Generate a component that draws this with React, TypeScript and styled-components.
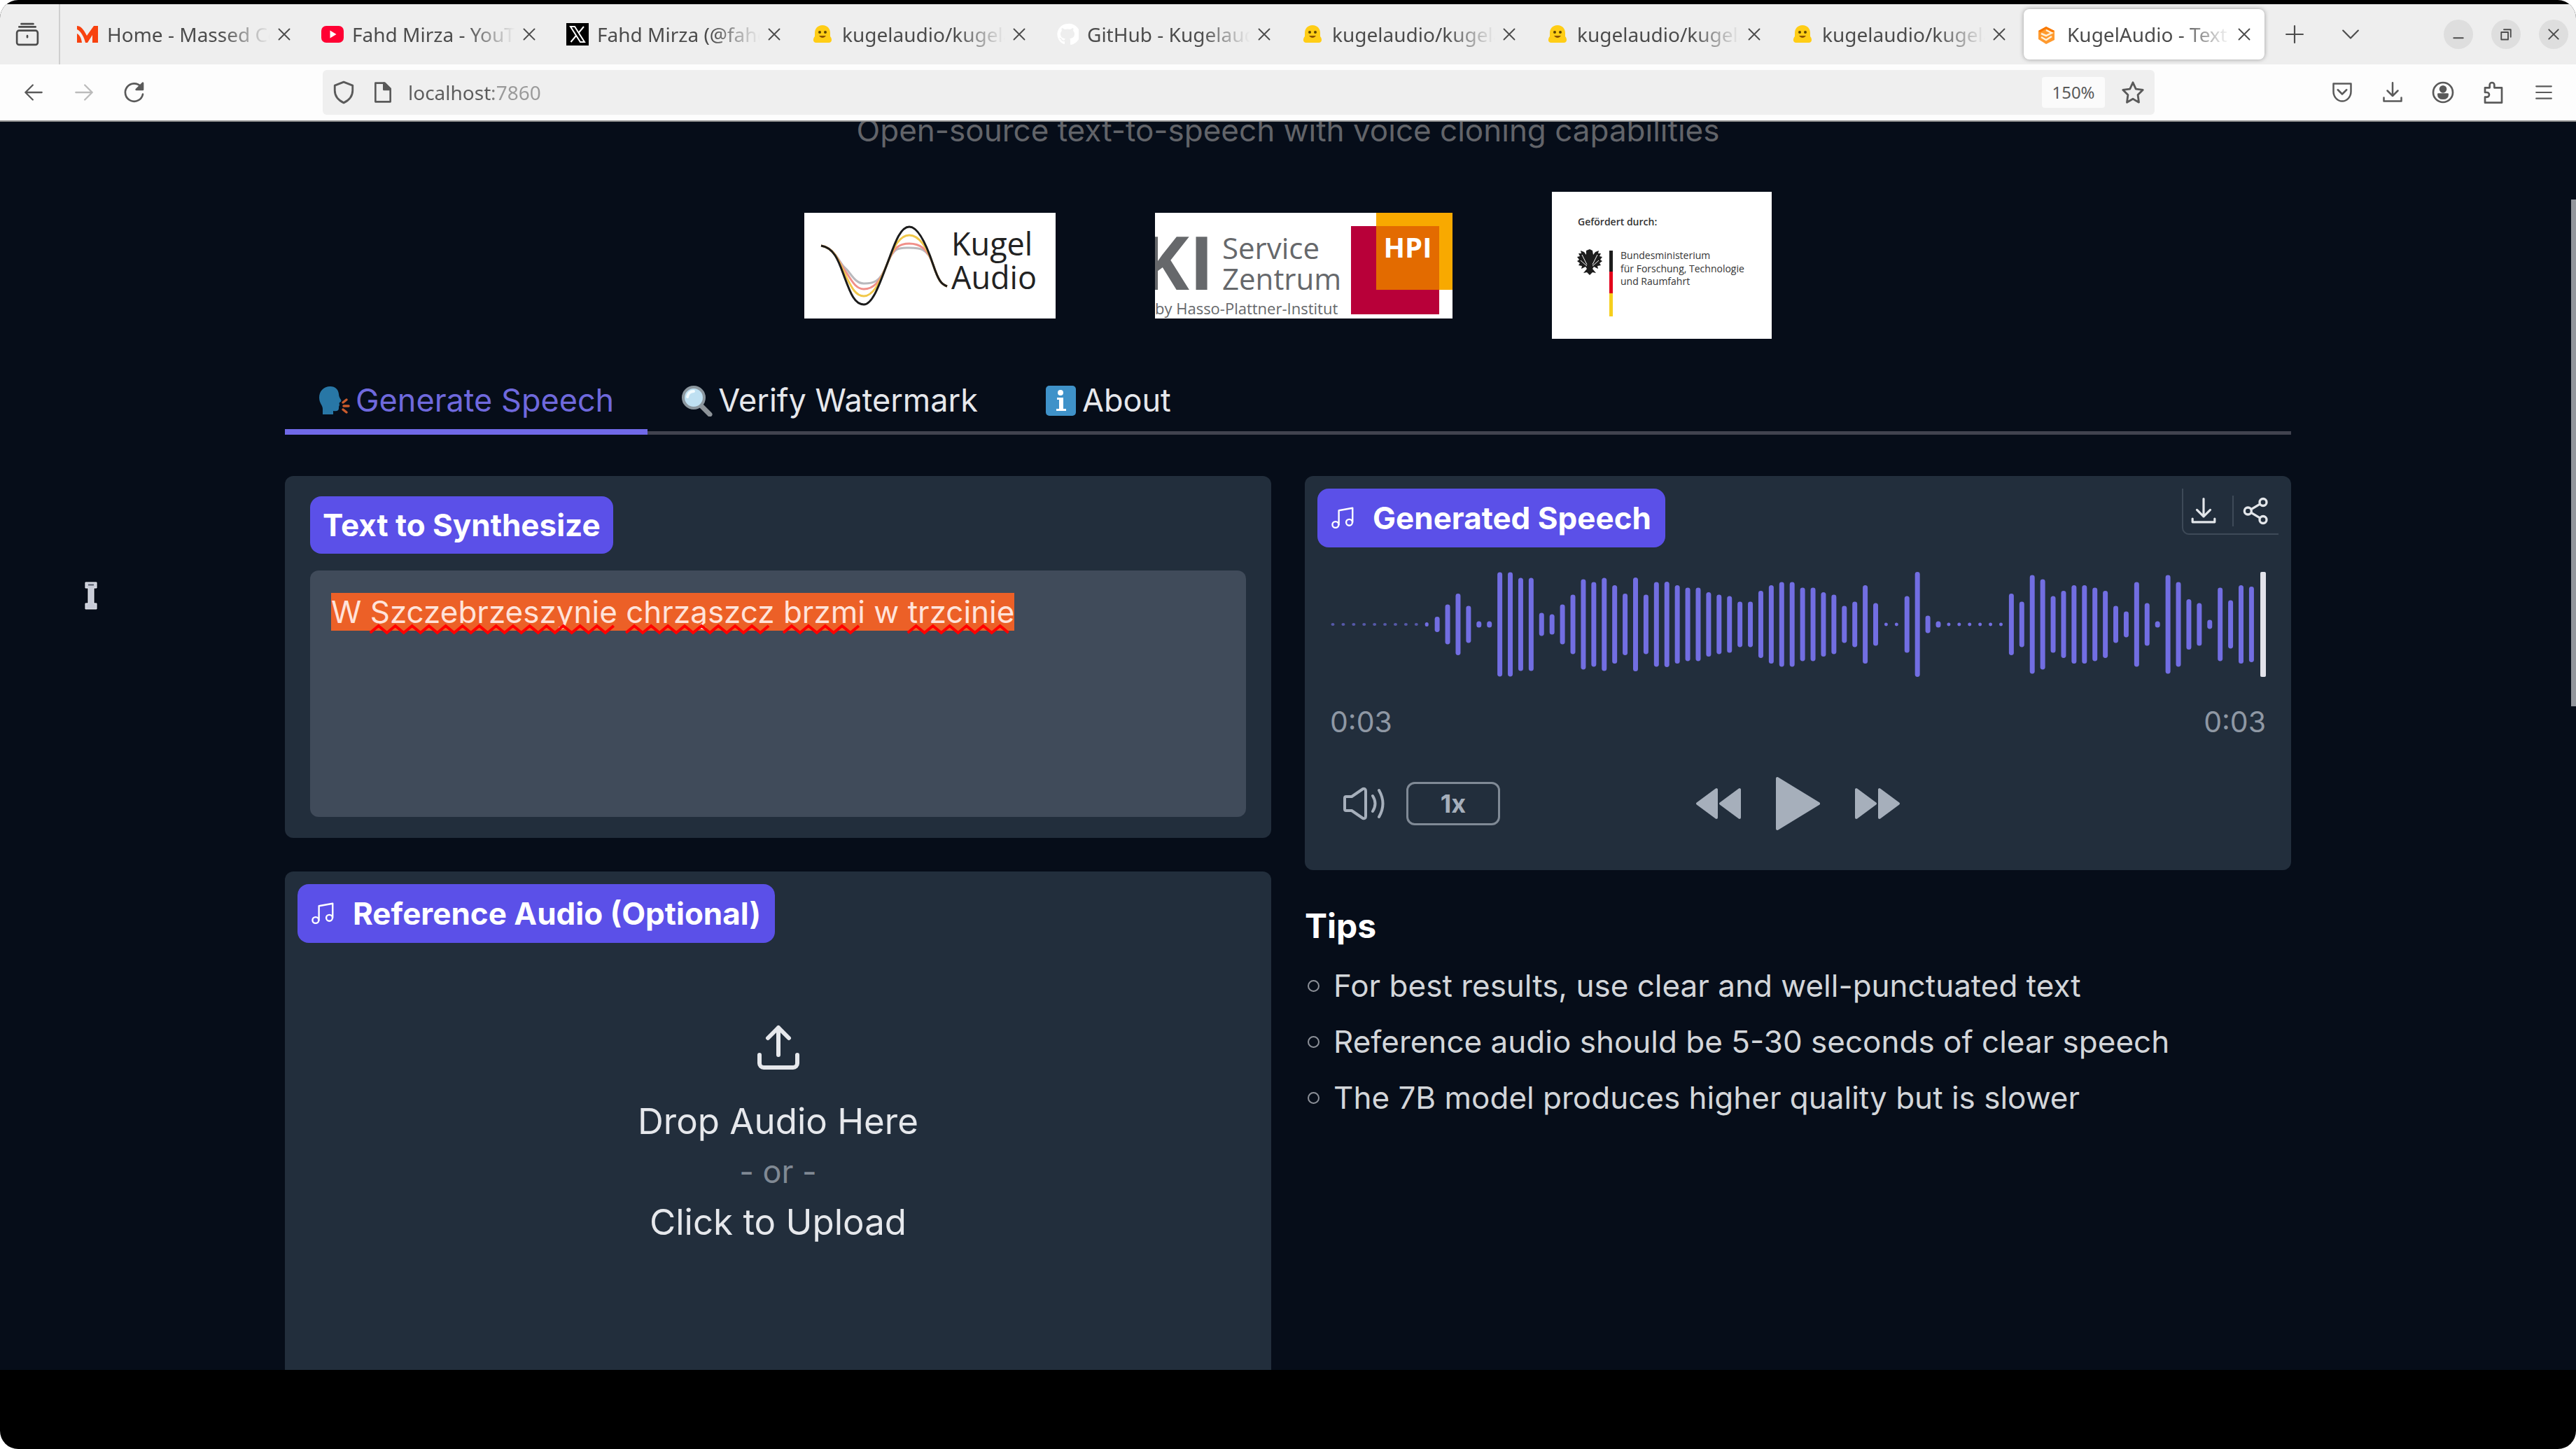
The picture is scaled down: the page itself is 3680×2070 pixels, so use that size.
import React, { useEffect, useLayoutEffect, useRef, useState } from "react";
import styled, { createGlobalStyle, css } from "styled-components";

const UI_FONT = `Inter, "Open Sans", sans-serif`;
const CHROME_FONT = `"Noto Sans", "Open Sans", sans-serif`;

const GlobalStyle = createGlobalStyle`
  *, *::before, *::after { box-sizing: border-box; }
  html, body { margin: 0; background: #ffffff; }
  body { font-family: ${UI_FONT}; }
  button, input, textarea { font: inherit; color: inherit; }
  button { border: 0; padding: 0; background: none; cursor: pointer; }
  h2, p, ul { margin: 0; padding: 0; }
`;

/* ---------- window frame ---------- */

const Frame = styled.div`
  position: relative;
  height: 100vh;
  display: flex;
  flex-direction: column;
  padding: 6px 0 113px;
  background: #000000;
  border-radius: 26px;
  overflow: hidden;
`;

const TabStrip = styled.header`
  display: flex;
  align-items: center;
  flex: none;
  height: 86px;
  background: #eeeeee;
  color: #4c4c4c;
  font: 400 28px/36px ${CHROME_FONT};
`;

const RecentButton = styled.button`
  display: grid;
  place-items: center;
  align-self: stretch;
  width: 86px;
  padding-right: 6px;
  border-right: 2px solid #cfcfcf;
`;

const BrowserTabs = styled.nav`
  display: flex;
  gap: 6px;
  padding-left: 5px;
`;

const BrowserTab = styled.div<{ $active?: boolean }>`
  display: flex;
  align-items: center;
  width: 344px;
  height: 72px;
  padding: 0 9px 0 18px;
  border-radius: 8px;
  ${(p) =>
    p.$active &&
    css`
      background: #ffffff;
      box-shadow: 0 0 6px rgba(0, 0, 0, 0.35);
    `}
`;

const TabTitle = styled.span`
  flex: 1;
  min-width: 0;
  margin-left: 12px;
  overflow: hidden;
  white-space: nowrap;
  mask-image: linear-gradient(to right, #000 70%, transparent 100%);
`;

const CloseButton = styled.button`
  display: grid;
  place-items: center;
  width: 40px;
  height: 40px;
`;

const StripActions = styled.div`
  display: flex;
  gap: 40px;
  margin-left: 23px;
`;

const WindowActions = styled.div`
  display: flex;
  gap: 26px;
  margin-left: auto;
  padding-right: 11px;
`;

const IconButton = styled.button<{ $round?: boolean }>`
  display: grid;
  place-items: center;
  width: 40px;
  height: 40px;
  ${(p) =>
    p.$round &&
    css`
      width: 42px;
      height: 42px;
      border-radius: 50%;
      background: #dedede;
    `}
  &:disabled {
    opacity: 0.4;
  }
`;

const NavBar = styled.div`
  display: flex;
  align-items: center;
  flex: none;
  height: 82px;
  background: #fdfdfd;
  border-bottom: 2px solid #8d8d8d;
  color: #5a5a5a;
  font: 400 28px/36px ${CHROME_FONT};
`;

const NavButtons = styled.div`
  display: flex;
  gap: 32px;
  width: 461px;
  padding-left: 28px;
`;

const AddressBar = styled.div`
  display: flex;
  align-items: center;
  flex: 1;
  height: 64px;
  padding: 0 11px 0 10px;
  gap: 16px;
  border-radius: 6px;
  background: #efefef;
`;

const AddressInput = styled.input`
  flex: 1;
  min-width: 0;
  border: 0;
  outline: 0;
  padding: 0;
  background: linear-gradient(to right, #5c5c5c 122px, #9a9a9a 122px);
  background-clip: text;
  color: transparent;
`;

const ZoomLevel = styled.button`
  width: 90px;
  height: 44px;
  margin-right: 4px;
  border-radius: 4px;
  background: #fbfbfb;
  font-size: 24px;
`;

const NavTools = styled.div`
  display: flex;
  justify-content: flex-end;
  gap: 32px;
  width: 602px;
  padding-right: 26px;
`;

/* ---------- page ---------- */

const Page = styled.main`
  position: relative;
  flex: 1;
  min-height: 0;
  overflow: hidden;
  background: #060d19;
  color: #e6e8ec;
`;

const ScrollThumb = styled.div`
  position: absolute;
  top: 111px;
  right: 0;
  width: 7px;
  height: 724px;
  background: #93969c;
`;

const Container = styled.div`
  width: 100%;
  max-width: 2866px;
  margin: 0 auto;
`;

const Subtitle = styled.p`
  margin-top: -18px;
  text-align: center;
  color: #626469;
  font-size: 44px;
  line-height: 60px;
`;

const LogoRow = styled.div`
  display: flex;
  justify-content: center;
  align-items: center;
  gap: 142px;
  margin-top: 58px;
`;

const Logo = styled.svg`
  display: block;
  background: #ffffff;
`;

const TabList = styled.div`
  display: flex;
  margin-top: 41px;
  box-shadow: inset 0 -5px #41434f;
`;

const PageTab = styled.button<{ $active?: boolean }>`
  display: flex;
  align-items: center;
  gap: 8px;
  height: 96px;
  padding: 6px 48px 0;
  border-bottom: 8px solid ${(p) => (p.$active ? "#7069e8" : "transparent")};
  color: ${(p) => (p.$active ? "#6f69dd" : "#e6e8ec")};
  font-size: 45px;
  line-height: 60px;
`;

const Columns = styled.div`
  display: grid;
  grid-template-columns: 1fr 1fr;
  align-items: start;
  gap: 48px;
  margin-top: 59px;
`;

const Column = styled.div`
  display: flex;
  flex-direction: column;
  gap: 48px;
`;

const Card = styled.section`
  border-radius: 12px;
  background: #222e3c;
`;

const labelLook = css`
  display: inline-flex;
  align-items: center;
  gap: 24px;
  border-radius: 16px;
  background: #5b50e8;
  color: #ffffff;
  font-size: 44px;
  font-weight: 700;
  line-height: 54px;
`;

const FieldLabel = styled.label`
  ${labelLook}
  padding: 14px 18px;
`;

const BlockLabel = styled.div`
  ${labelLook}
  height: 84px;
  padding: 0 20px 0 17px;
`;

const TextCard = styled(Card)`
  display: flex;
  flex-direction: column;
  align-items: flex-start;
  gap: 24px;
  padding: 29px 36px 30px;
`;

const TextWrap = styled.div`
  position: relative;
  width: 100%;
`;

const TextArea = styled.textarea`
  display: block;
  width: 100%;
  height: 352px;
  padding: 33px 30px;
  border: 0;
  outline: 0;
  border-radius: 12px;
  resize: none;
  background: #404b5a;
  font-size: 44px;
  line-height: 52px;
  &::selection {
    background: #ec6027;
    color: #ffe3da;
  }
`;

const Squiggles = styled.svg`
  position: absolute;
  inset: 0;
  width: 100%;
  height: 100%;
  pointer-events: none;
`;

const CardHead = styled.div`
  display: flex;
  justify-content: space-between;
  align-items: flex-start;
  padding: 18px 18px 0;
`;

const DropArea = styled.label`
  display: flex;
  flex-direction: column;
  align-items: center;
  height: 800px;
  padding-top: 115px;
  font-size: 51px;
  line-height: 72px;
  cursor: pointer;
  svg { margin-bottom: 32px; }
`;

const HiddenInput = styled.input`
  position: absolute;
  width: 1px;
  height: 1px;
  opacity: 0;
`;

const OrText = styled.span`
  color: #808994;
  font-size: 45px;
`;

const CardTools = styled.div`
  display: flex;
  align-items: center;
  height: 66px;
  border: solid #3e4a58;
  border-width: 0 0 2px 2px;
  border-radius: 0 0 0 10px;
  color: #e3e6ea;
`;

const CardTool = styled.button`
  display: grid;
  place-items: center;
  width: 70px;
  height: 44px;
  padding-right: 12px;
  & + & {
    width: 66px;
    padding-right: 0;
    border-left: 2px solid #3e4a58;
  }
`;

const Player = styled.div`
  display: flex;
  flex-direction: column;
  padding: 35px 36px 55px;
  color: #a6afbb;
`;

const Wave = styled.svg`
  display: block;
  width: 100%;
  height: 150px;
`;

const Times = styled.div`
  display: flex;
  justify-content: space-between;
  margin-top: 34px;
  color: #8f98a4;
  font-size: 41px;
  line-height: 60px;
`;

const Controls = styled.div`
  display: grid;
  grid-template-columns: 1fr auto 1fr;
  align-items: center;
  height: 80px;
  margin-top: 47px;
`;

const ControlGroup = styled.div<{ $gap: number }>`
  display: flex;
  align-items: center;
  gap: ${(p) => p.$gap}px;
`;

const VolumeButton = styled.button`
  display: grid;
  margin-left: 17px;
`;

const SpeedButton = styled.button`
  width: 134px;
  height: 62px;
  border: 3px solid #808a96;
  border-radius: 12px;
  color: #a6afbb;
  font-size: 36px;
  font-weight: 700;
`;

const PlayerButton = styled.button`
  display: grid;
`;

const TipsTitle = styled.h2`
  color: #ffffff;
  font-size: 48px;
  font-weight: 700;
  line-height: 64px;
`;

const TipList = styled.ul`
  margin-top: 13px;
  list-style: none;
  color: #d3d6da;
  font-size: 44px;
  line-height: 80px;
`;

const Tip = styled.li`
  display: flex;
  align-items: center;
  gap: 20px;
  padding-left: 4px;
  &::before {
    content: "";
    width: 17px;
    height: 17px;
    border: 2px solid #8c9098;
    border-radius: 50%;
  }
`;

const Pointer = styled.svg`
  position: absolute;
  left: 121px;
  top: 831px;
`;

/* ---------- drawings ---------- */

type GlyphProps = { size?: number; width?: number; children: React.ReactNode; box?: string };

const Glyph = ({ size = 34, width = 2, box = "0 0 24 24", children }: GlyphProps) => (
  <svg
    width={size}
    height={size}
    viewBox={box}
    fill="none"
    stroke="currentColor"
    strokeWidth={width}
    strokeLinecap="round"
    strokeLinejoin="round"
    aria-hidden
  >
    {children}
  </svg>
);

const MusicIcon = () => (
  <Glyph size={38} width={1.5}>
    <path d="M8.6 18V5.2L21 3v12.6" />
    <circle cx="5.6" cy="18" r="2.8" />
    <circle cx="18" cy="16" r="2.8" />
  </Glyph>
);

const Favicon = ({ kind }: { kind: string }) => (
  <svg width="32" height="32" viewBox="0 0 32 32" aria-hidden>
    {kind === "massed" && (
      <g fill="#f8420f">
        <path d="M1 4c5 0 9 4 14 14L25 4h6v24h-8V17l-7 11h-3C11 20 7 12 1 9z" />
        <path d="M1 15c4 2 6 6 7 13H1z" />
      </g>
    )}
    {kind === "youtube" && (
      <>
        <rect y="4" width="32" height="24" rx="7" fill="#ff0033" />
        <path d="M12.500 10.500v11l9-5.500z" fill="#fff" />
      </>
    )}
    {kind === "x" && (
      <>
        <rect width="32" height="32" fill="#000" />
        <path d="M6 5h6l14 22h-6z" fill="none" stroke="#fff" strokeWidth="2" />
        <path d="M25 5L17.500 14M14 18L6.500 27" stroke="#fff" strokeWidth="2" />
      </>
    )}
    {kind === "face" && (
      <>
        <path d="M16 3c7 0 11 5 11 11v5c3 3 3 9-2 9H7c-5 0-5-6-2-9v-5C5 8 9 3 16 3z" fill="#ffcd16" />
        <circle cx="12" cy="13" r="2" fill="#5b4300" />
        <circle cx="20" cy="13" r="2" fill="#5b4300" />
        <path d="M11 18c3 4 7 4 10 0z" fill="#8a5200" />
      </>
    )}
    {kind === "github" && (
      <path
        fill="#fff"
        d="M16 1a15 15 0 0 0-5 29c1 0 1-1 1-1v-3c-4 1-5-2-5-2-1-2-2-2-2-2-1-1 0-1 0-1 2 0 3 2 3 2 1 2 3 2 4 1 0-1 1-2 1-2-4 0-7-2-7-7 0-2 1-3 2-4-1-2 0-4 0-4s1 0 4 2a14 14 0 0 1 8 0c3-2 4-2 4-2s1 2 0 4c1 1 2 2 2 4 0 5-3 7-7 7 1 1 1 2 1 3v5s0 1 1 1A15 15 0 0 0 16 1z"
      />
    )}
    {kind === "gradio" && (
      <>
        <path d="M14 5l12 6v13l-12 6L3 23V11z" fill="#ff9a2e" />
        <path d="M14 10l8 4-8 4-7-3M22 19l-8 5-7-4" fill="none" stroke="#fff0d8" strokeWidth="2.500" />
        <path d="M3 11l11-6 12 6-3 2-9-5-8 5z" fill="#f97700" />
      </>
    )}
  </svg>
);

const HeadIcon = () => (
  <svg width="45" height="45" viewBox="0 0 45 45" aria-hidden>
    <path
      d="M17 2C7 2 1 9 1 18c0 8 5 11 5 16v8h15v-5c5 1 8 0 8-4 0-2 0-3 1-4 0-2-1-2 0-4 2-1 3-2 2-4-2-3-3-5-3-8C28 6 24 2 17 2z"
      fill="#2877a6"
    />
    <path d="M35 25l5-4M36 30h7M35 35l5 4" stroke="#c95b2c" strokeWidth="3.500" strokeLinecap="round" />
  </svg>
);

const LensIcon = () => (
  <svg width="45" height="45" viewBox="0 0 45 45" aria-hidden>
    <path d="M28 29l13 13" stroke="#8d9399" strokeWidth="7" strokeLinecap="round" />
    <circle cx="18" cy="18" r="15" fill="#bfe0f2" stroke="#8c979f" strokeWidth="4" />
    <path d="M9 17c1-5 4-8 9-8" stroke="#f2fbff" strokeWidth="4" fill="none" strokeLinecap="round" />
  </svg>
);

const InfoIcon = () => (
  <svg width="45" height="45" viewBox="0 0 45 45" aria-hidden>
    <rect x="1" y="1" width="43" height="43" rx="5" fill="#3f92c9" />
    <circle cx="22" cy="11" r="4" fill="#fff" />
    <path d="M17 18h9v16h4v3H16v-3h4V21h-3z" fill="#fff" />
  </svg>
);

const waves: [string, number, number][] = [
  ["#b9b9bd", 101, 50],
  ["#f0908a", 109, 44],
  ["#f1c84a", 119, 32],
  ["#1b1b1b", 131, 20],
];

const KugelLogo = () => (
  <Logo width="359" height="151" viewBox="0 0 359 151" role="img" aria-label="KugelAudio logo">
    {waves.map(([color, low, high]) => (
      <path
        key={color}
        d={`M24 47 C44 50 50 72 58 ${(low + 56) / 2} S72 ${low} 85 ${low} S108 100 118 74 S136 ${high} 150 ${high} S176 50 184 74 S196 102 204 105`}
        fill="none"
        stroke={color}
        strokeWidth="3"
      />
    ))}
    <g fill="#222" fontFamily="Open Sans" fontSize="45">
      <text x="210" y="61">Kugel</text>
      <text x="210" y="109">Audio</text>
    </g>
  </Logo>
);

const HpiLogo = () => (
  <Logo width="425" height="151" viewBox="0 0 425 151" role="img" aria-label="KI Service Zentrum logo">
    <rect x="280" y="19" width="126" height="126" fill="#b80039" />
    <rect x="316" width="109" height="110" fill="#f8a900" />
    <rect x="316" y="19" width="90" height="91" fill="#e36b00" />
    <g fontFamily="Open Sans" fill="#66686b">
      <text x="84" y="110" fontSize="106" fontWeight="700" textAnchor="end">KI</text>
      <text x="96" y="66" fontSize="42">Service</text>
      <text x="96" y="110" fontSize="42">Zentrum</text>
      <text x="0" y="145" fontSize="22">by Hasso-Plattner-Institut</text>
    </g>
    <text x="361" y="64" fontFamily="Open Sans" fontSize="40" fontWeight="700" fill="#fff" textAnchor="middle">
      HPI
    </text>
  </Logo>
);

const MinistryLogo = () => (
  <Logo width="314" height="210" viewBox="0 0 314 210" role="img" aria-label="Bundesministerium logo">
    <path
      fill="#1d1d1d"
      d="M54 82l4 2 1 6 3-4 5-2-1 4 4 0-2 4 4 1-3 4 3 2-4 3 2 3-5 1 1 4-6-3-2 3 5 6-5-1-4 4-4-4-5 1 5-6-2-3-6 3 1-4-5-1 2-3-4-3 3-2-3-4 4-1-2-4h4l-1-4 5 2 3 4 0-6z"
    />
    <path d="M43 90l7 14M65 90l-7 14M41 98l9 8M67 98l-9 8" stroke="#fff" strokeWidth="1" />
    <rect x="82" y="84" width="5" height="30" fill="#1d1d1d" />
    <rect x="82" y="114" width="5" height="31" fill="#e2001a" />
    <rect x="82" y="145" width="5" height="33" fill="#f6cf1d" />
    <g fill="#333" fontFamily="Open Sans" fontSize="14">
      <text x="37" y="48" fontWeight="600">Gefördert durch:</text>
      <text x="98" y="96">Bundesministerium</text>
      <text x="98" y="115">für Forschung, Technologie</text>
      <text x="98" y="133">und Raumfahrt</text>
    </g>
  </Logo>
);

/* bar heights of the clip, left to right */
const bars = [
  4, 4, 4, 4, 4, 4, 4, 4, 4, 6, 22, 57, 88, 53, 9, 9, 149, 149, 133, 133, 33, 29, 57, 85, 129, 121, 133, 112, 88,
  134, 85, 121, 122, 112, 105, 105, 92, 85, 81, 65, 65, 96, 112, 121, 121, 105, 105, 92, 85, 53, 65, 112, 61, 5, 5,
  81, 150, 25, 9, 5, 5, 5, 5, 5, 5, 88, 65, 141, 129, 81, 96, 112, 112, 105, 96, 53, 37, 121, 61, 9, 141, 121, 72,
  61, 13, 105, 69, 112, 108,
];

const Waveform = () => (
  <Wave viewBox="0 0 1338 150" role="img" aria-label="Waveform">
    {bars.map((h, i) => {
      const w = h < 7 ? 5 : 7;
      return (
        <rect
          key={i}
          x={4 + i * 14.925 - w / 2}
          y={75 - h / 2}
          width={w}
          height={h}
          rx={w / 2}
          fill="#726ee2"
          opacity={h < 5 ? 0.65 : 1}
        />
      );
    })}
    <rect x="1330" y="0" width="8" height="150" rx="2" fill="#e3e3ea" />
  </Wave>
);

/* ---------- text box with spelling marks ---------- */

const SENTENCE = "W Szczebrzeszynie chrząszcz brzmi w trzcinie";
const UNKNOWN = ["Szczebrzeszynie", "chrząszcz", "brzmi", "trzcinie"];

function SpellCheckedText() {
  const ref = useRef<HTMLTextAreaElement>(null);
  const [marks, setMarks] = useState<[number, number][]>([]);

  useLayoutEffect(() => {
    const ctx = document.createElement("canvas").getContext("2d");
    if (!ctx || !ref.current) return;
    const style = getComputedStyle(ref.current);
    ctx.font = `${style.fontWeight} ${style.fontSize} ${style.fontFamily}`;
    const left = parseFloat(style.paddingLeft);
    setMarks(
      UNKNOWN.map((word) => {
        const start = ctx.measureText(SENTENCE.slice(0, SENTENCE.indexOf(word))).width;
        return [left + start, left + start + ctx.measureText(word).width];
      })
    );
  }, []);

  useEffect(() => {
    ref.current?.focus();
    ref.current?.select();
  }, []);

  const zigzag = (from: number, to: number) => {
    let d = `M${from} 89`;
    for (let x = from + 12, up = true; x <= to; x += 12, up = !up) d += `L${x} ${up ? 79 : 89}`;
    return d;
  };

  return (
    <TextWrap>
      <TextArea id="synth-text" ref={ref} spellCheck={false} defaultValue={SENTENCE} />
      <Squiggles aria-hidden>
        {marks.map(([from, to]) => (
          <path key={from} d={zigzag(from, to)} fill="none" stroke="#ff0000" strokeWidth="4" />
        ))}
      </Squiggles>
    </TextWrap>
  );
}

/* ---------- app ---------- */

const browserTabs = [
  { icon: "massed", title: "Home - Massed Compute" },
  { icon: "youtube", title: "Fahd Mirza - YouTube" },
  { icon: "x", title: "Fahd Mirza (@fahdmirza)" },
  { icon: "face", title: "kugelaudio/kugelaudio" },
  { icon: "github", title: "GitHub - Kugelaudio" },
  { icon: "face", title: "kugelaudio/kugelaudio" },
  { icon: "face", title: "kugelaudio/kugelaudio" },
  { icon: "face", title: "kugelaudio/kugelaudio" },
  { icon: "gradio", title: "KugelAudio - Text to Speech", active: true },
];

const tips = [
  "For best results, use clear and well-punctuated text",
  "Reference audio should be 5-30 seconds of clear speech",
  "The 7B model produces higher quality but is slower",
];

const CloseGlyph = () => (
  <Glyph size={18} width={2.5}>
    <path d="M2 2l20 20M22 2L2 22" />
  </Glyph>
);

export default function App() {
  return (
    <>
      <GlobalStyle />
      <Frame>
        <TabStrip>
          <RecentButton aria-label="Recent browsing">
            <Glyph size={34} width={2.5} box="0 0 32 32">
              <rect x="2" y="11" width="28" height="19" rx="3" />
              <path d="M5 6h22M8 2h16M16 18v2" />
            </Glyph>
          </RecentButton>
          <BrowserTabs>
            {browserTabs.map((t, i) => (
              <BrowserTab key={i} $active={t.active}>
                <Favicon kind={t.icon} />
                <TabTitle>{t.title}</TabTitle>
                <CloseButton aria-label="Close tab">
                  <CloseGlyph />
                </CloseButton>
              </BrowserTab>
            ))}
          </BrowserTabs>
          <StripActions>
            <IconButton aria-label="New tab">
              <Glyph size={26}>
                <path d="M12 1v22M1 12h22" />
              </Glyph>
            </IconButton>
            <IconButton aria-label="List all tabs">
              <Glyph size={26}>
                <path d="M2 7l10 10L22 7" />
              </Glyph>
            </IconButton>
          </StripActions>
          <WindowActions>
            <IconButton $round aria-label="Minimize">
              <Glyph size={16} width={3}>
                <path d="M2 20h20" />
              </Glyph>
            </IconButton>
            <IconButton $round aria-label="Restore">
              <Glyph size={18} width={2.5}>
                <path d="M3 8h13v14H3zM8 3h13v14" />
              </Glyph>
            </IconButton>
            <IconButton $round aria-label="Close window">
              <Glyph size={16} width={3}>
                <path d="M2 2l20 20M22 2L2 22" />
              </Glyph>
            </IconButton>
          </WindowActions>
        </TabStrip>

        <NavBar>
          <NavButtons>
            <IconButton aria-label="Back">
              <Glyph size={28}>
                <path d="M22 12H2M11 3l-9 9 9 9" />
              </Glyph>
            </IconButton>
            <IconButton aria-label="Forward" disabled>
              <Glyph size={28}>
                <path d="M2 12h20M13 3l9 9-9 9" />
              </Glyph>
            </IconButton>
            <IconButton aria-label="Reload">
              <Glyph size={32}>
                <path d="M21 14a9.500 9.500 0 1 1-2-8" />
                <path d="M21 2v7h-7z" fill="currentColor" />
              </Glyph>
            </IconButton>
          </NavButtons>
          <AddressBar>
            <IconButton aria-label="Tracking protection">
              <Glyph size={34}>
                <path d="M12 1.500l9 3.500v5c0 6-4 10-9 12.500C7 20 3 16 3 10V5z" />
              </Glyph>
            </IconButton>
            <IconButton aria-label="Site information">
              <Glyph size={32}>
                <path d="M4 2h10l6 6v14H4z" />
                <path d="M13 2v7h7z" fill="currentColor" />
              </Glyph>
            </IconButton>
            <AddressInput aria-label="Address" defaultValue="localhost:7860" />
            <ZoomLevel>150%</ZoomLevel>
            <IconButton aria-label="Bookmark">
              <Glyph size={34}>
                <path d="M12 2l3 6.500 7 1-5 5 1 7.500-6-3.500L6 22l1-7.500-5-5 7-1z" />
              </Glyph>
            </IconButton>
          </AddressBar>
          <NavTools>
            <IconButton aria-label="Pocket">
              <Glyph size={30}>
                <path d="M2 2h20v9a10 11 0 0 1-20 0zM7 9l5 5 5-5" />
              </Glyph>
            </IconButton>
            <IconButton aria-label="Downloads">
              <Glyph size={30}>
                <path d="M12 1v15M6 10l6 6 6-6M2 18v4h20v-4" />
              </Glyph>
            </IconButton>
            <IconButton aria-label="Account">
              <Glyph size={32}>
                <circle cx="12" cy="12" r="10.500" />
                <circle cx="12" cy="8.500" r="3" fill="currentColor" />
                <path d="M7 14h10c0 3-2 4.500-5 4.500S7 17 7 14z" fill="currentColor" />
              </Glyph>
            </IconButton>
            <IconButton aria-label="Extensions">
              <Glyph size={32}>
                <path d="M8 7V4a2.500 2.500 0 0 1 5 0v3h8v16H3v-6h2a2.500 2.500 0 0 0 0-5H3V7z" />
              </Glyph>
            </IconButton>
            <IconButton aria-label="Menu">
              <Glyph size={26}>
                <path d="M2 4h20M2 12h20M2 20h20" />
              </Glyph>
            </IconButton>
          </NavTools>
        </NavBar>

        <Page>
          <Container>
            <Subtitle>Open-source text-to-speech with voice cloning capabilities</Subtitle>
            <LogoRow>
              <KugelLogo />
              <HpiLogo />
              <MinistryLogo />
            </LogoRow>
            <TabList role="tablist">
              <PageTab role="tab" aria-selected $active>
                <HeadIcon />
                Generate Speech
              </PageTab>
              <PageTab role="tab">
                <LensIcon />
                Verify Watermark
              </PageTab>
              <PageTab role="tab">
                <InfoIcon />
                About
              </PageTab>
            </TabList>

            <Columns>
              <Column>
                <TextCard>
                  <FieldLabel htmlFor="synth-text">Text to Synthesize</FieldLabel>
                  <SpellCheckedText />
                </TextCard>
                <Card>
                  <CardHead>
                    <BlockLabel>
                      <MusicIcon />
                      Reference Audio (Optional)
                    </BlockLabel>
                  </CardHead>
                  <DropArea>
                    <HiddenInput type="file" accept="audio/*" />
                    <Glyph size={72}>
                      <path d="M21 15v4a2 2 0 0 1-2 2H5a2 2 0 0 1-2-2v-4M17 7l-5-5-5 5M12 2v13" />
                    </Glyph>
                    <span>Drop Audio Here</span>
                    <OrText>- or -</OrText>
                    <span>Click to Upload</span>
                  </DropArea>
                </Card>
              </Column>

              <Column>
                <Card>
                  <CardHead>
                    <BlockLabel>
                      <MusicIcon />
                      Generated Speech
                    </BlockLabel>
                    <CardTools>
                      <CardTool aria-label="Download">
                        <Glyph size={38} width={2}>
                          <path d="M12 1v16M6 11l6 6 6-6M2 19v3h20v-3" />
                        </Glyph>
                      </CardTool>
                      <CardTool aria-label="Share">
                        <Glyph size={40} width={2}>
                          <circle cx="18" cy="4.500" r="3" />
                          <circle cx="18" cy="19.500" r="3" />
                          <circle cx="5" cy="12" r="3" />
                          <path d="M8 10.400l7-4.200M8 13.600l7 4.200" />
                        </Glyph>
                      </CardTool>
                    </CardTools>
                  </CardHead>
                  <Player>
                    <Waveform />
                    <Times>
                      <time>0:03</time>
                      <time>0:03</time>
                    </Times>
                    <Controls>
                      <ControlGroup $gap={28}>
                        <VolumeButton aria-label="Volume">
                          <svg width="64" height="50" viewBox="0 0 64 50" fill="none" stroke="currentColor" strokeWidth="4" strokeLinecap="round" strokeLinejoin="round" aria-hidden>
                            <path d="M4 17v16q0 2 2 2h8l16 11q4 1 4-3V7q0-4-4-3L14 15H6q-2 0-2 2zM44 14q7 11 0 22M53 6q11 19 0 38" />
                          </svg>
                        </VolumeButton>
                        <SpeedButton>1x</SpeedButton>
                      </ControlGroup>
                      <ControlGroup $gap={49}>
                        <PlayerButton aria-label="Skip back">
                          <svg width="66" height="46" viewBox="0 0 66 46" fill="#a6afbb" stroke="#a6afbb" strokeWidth="4" strokeLinejoin="round" aria-hidden>
                            <path d="M30 3v40L3 23zM63 3v40L36 23z" />
                          </svg>
                        </PlayerButton>
                        <PlayerButton aria-label="Play">
                          <svg width="63" height="78" viewBox="0 0 63 78" fill="#a6afbb" stroke="#a6afbb" strokeWidth="4" strokeLinejoin="round" aria-hidden>
                            <path d="M2 3v72l59-36z" />
                          </svg>
                        </PlayerButton>
                        <PlayerButton aria-label="Skip forward">
                          <svg width="66" height="46" viewBox="0 0 66 46" fill="#a6afbb" stroke="#a6afbb" strokeWidth="4" strokeLinejoin="round" aria-hidden>
                            <path d="M3 3v40l27-20zM36 3v40l27-20z" />
                          </svg>
                        </PlayerButton>
                      </ControlGroup>
                    </Controls>
                  </Player>
                </Card>
                <section>
                  <TipsTitle>Tips</TipsTitle>
                  <TipList>
                    {tips.map((tip) => (
                      <Tip key={tip}>{tip}</Tip>
                    ))}
                  </TipList>
                </section>
              </Column>
            </Columns>
          </Container>
          <ScrollThumb />
        </Page>
        <Pointer width="18" height="40" viewBox="0 0 18 40" aria-hidden>
          <path d="M1 1h16v8h-4v22h4v8H1v-8h4V9H1z" fill="#c8ccd8" stroke="#f0f2f6" strokeWidth="1" />
          <path d="M5 4.500h8" stroke="#555b68" strokeWidth="2" />
        </Pointer>
      </Frame>
    </>
  );
}
